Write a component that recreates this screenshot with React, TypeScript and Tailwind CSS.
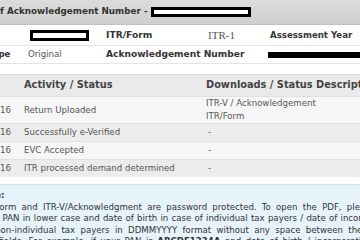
const rows = [
  { date: "20/07/2016", activity: "Return Uploaded", download: ["ITR-V / Acknowledgement", "ITR/Form"], bg: "bg-[#f6f6f6]", h: "h-[27px]" },
  { date: "21/07/2016", activity: "Successfully e-Verified", download: ["-"], bg: "bg-[#ececec]", h: "h-[18px]" },
  { date: "21/07/2016", activity: "EVC Accepted", download: ["-"], bg: "bg-[#f6f6f6]", h: "h-[18px]" },
  { date: "14/09/2016", activity: "ITR processed demand determined", download: ["-"], bg: "bg-[#ececec]", h: "h-[18px]" },
];

function Redacted({ className }: { className: string }) {
  return <span className={`inline-block shrink-0 border-[3px] border-black bg-white ${className}`} />;
}

export default function App() {
  return (
    <div className="w-[360px] h-[240px] overflow-hidden bg-white text-[8.6px] text-[#555] font-['DejaVu_Sans',sans-serif]">
      <div className="-ml-[30px] w-[430px]">
        {/* title bar */}
        <div className="h-[25px] flex items-center bg-gradient-to-b from-[#dcdcdc] to-[#cfcfcf] border-b border-[#c2c2c2] font-bold text-[8.8px] text-[#333] whitespace-nowrap">
          <span className="pl-[24px]">of Acknowledgement Number -</span>
          <Redacted className="ml-[3px] w-[100px] h-[10px]" />
        </div>

        {/* summary */}
        <div className="flex h-[21px] items-center border-b border-[#e4e4e4] whitespace-nowrap">
          <span className="w-[60px] shrink-0" />
          <Redacted className="w-[59px] h-[11px]" />
          <span className="ml-[17px] w-[102px] shrink-0 font-bold text-[9.2px] text-[#333]">ITR/Form</span>
          <span className="w-[62px] shrink-0 pt-[1px] font-['Liberation_Serif',serif] text-[11px] text-[#555]">ITR-1</span>
          <span className="font-bold text-[#333]">Assessment Year</span>
        </div>
        <div className="flex h-[18px] items-center border-b border-[#e4e4e4] whitespace-nowrap">
          <span className="w-[58px] shrink-0 pl-[18px] font-bold text-[#333]">Type</span>
          <span className="w-[78px] shrink-0">Original</span>
          <span className="w-[162px] shrink-0 font-bold text-[9.1px] text-[#333]">Acknowledgement Number</span>
          <span className="inline-block w-[100px] h-[6px] bg-black" />
        </div>

        {/* timeline table */}
        <div className="mt-[10px]">
          <div className="flex h-[22px] items-center bg-[#eaeaea] border-t border-[#dedede] font-bold text-[9.8px] text-[#444] whitespace-nowrap">
            <span className="w-[54px] shrink-0" />
            <span className="w-[182px] shrink-0">Activity / Status</span>
            <span>Downloads / Status Description</span>
          </div>
          {rows.map((r, i) => (
            <div key={i} className={`flex items-center border-t border-[#e0e0e0] whitespace-nowrap ${r.bg} ${r.h}`}>
              <div className="w-[54px] shrink-0 pr-[13px] flex justify-end">
                <span>{r.date}</span>
              </div>
              <span className="w-[182px] shrink-0">{r.activity}</span>
              <div className="flex flex-col leading-[13px]">
                {r.download.map((d) => (
                  <span key={d} className={d === "-" ? "pl-[2px]" : ""}>{d}</span>
                ))}
              </div>
            </div>
          ))}
        </div>

        {/* note */}
        <div className="mt-[7px] h-[60px] bg-[#e6f3fb] border-t border-[#cbe4f2] pt-[5px] pl-[8px] text-[#333] leading-[11.5px] whitespace-nowrap">
          <div className="font-bold">Note:</div>
          <div className="[word-spacing:2.5px]">
            ITR/Form and ITR-V/Acknowledgment are password protected. To open the PDF, please enter
          </div>
          <div className="pl-[2px] [word-spacing:0.5px]">
            your PAN in lower case and date of birth in case of individual tax payers / date of incorporation
          </div>
          <div className="[word-spacing:2.6px]">
            for non-individual tax payers in DDMMYYYY format without any space between the
          </div>
          <div className="[word-spacing:1.8px]">
            two fields. For example, if your PAN is <b>ABCDE1234A</b> and date of birth / incorporation is
          </div>
        </div>
      </div>
    </div>
  );
}
